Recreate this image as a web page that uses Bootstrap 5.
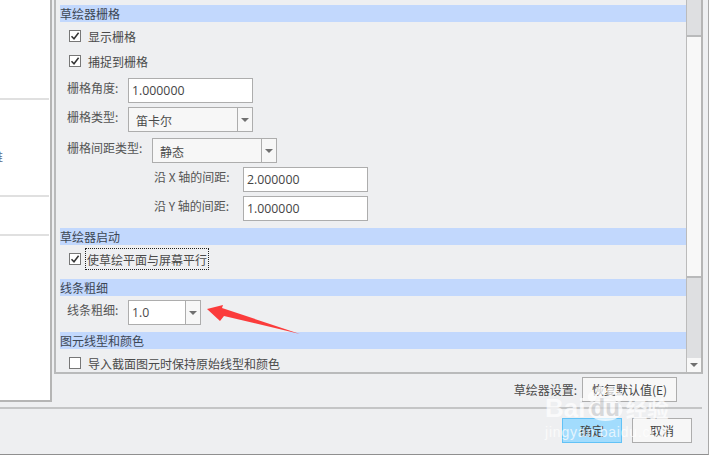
<!DOCTYPE html>
<html lang="zh"><head><meta charset="utf-8">
<link href="https://cdn.jsdelivr.net/npm/bootstrap@5.3.0/dist/css/bootstrap.min.css" rel="stylesheet">
<style>
html,body{margin:0;height:455px;overflow:hidden}
body{background:#eeeff1;font:12px/17px "Noto Sans CJK SC","Liberation Sans",sans-serif;color:#4a4a4a;}
.dlg{width:709px;height:455px;border-right:1px solid #a9a9a9;border-bottom:1px solid #8f8f8f;position:relative;overflow:hidden}
.upper{height:407px}
.nav-pane{width:52px;height:402px;background:#fff;border-right:2px solid #b5b5b5;border-bottom:2px solid #b5b5b5;flex:none;overflow:hidden}
.nav-sep{height:2px;width:49px;background:#e0e0e0}
.nav-a{height:98px}.nav-b{height:95px;padding-top:48px}.nav-c{height:37px}
.nav-cut{display:block;color:#5a6a88;margin-left:-9px;line-height:17px;height:17px}
.set-pane{margin-left:2px;width:632px;height:374px;border-left:2px solid #b9babb;border-bottom:2px solid #b9babb;padding:5px 0 0 4px;overflow:hidden;flex:none}
.scroll-bar{width:17px;height:374px;border-bottom:2px solid #b9babb;border-left:1px solid #bbb;border-right:2px solid #b5b5b5;flex:none}
.sb-top{height:37px;background:#dedfe1;border-bottom:2px solid #b9babb}
.sb-thumb{height:241px;background:#f8f8f8;border-bottom:2px solid #b9babb}
.sb-low{height:80px;background:#dedfe1}
.sb-btn{height:14px;background:#f8f8f8;padding-top:5px}
.sect{height:17px;background:#c2d8fd;color:#3c4654;line-height:17px}
.sect1{margin-bottom:8px}
.chk-row{height:12px;margin-left:9px;gap:7px;line-height:12px}
.chk-txt{margin-top:2px}
.tick{width:12px;height:12px;border:1px solid #777;background:#fff;flex:none}
.tick svg{display:block}
.gap14{margin-top:13px}
.fld{margin-top:11px;height:25px;align-items:flex-start}
.fld-lab{line-height:17px;color:#555;white-space:nowrap;padding-top:1px}
.box{width:125px;height:25px;border:1px solid #adadad;background:#fff;padding-left:3px;line-height:24px;font-size:12.3px;font-family:"Open Sans","Liberation Sans",sans-serif;color:#444;flex:none}
.drop{width:125px;height:25px;border:1px solid #adadad;background:#f7f7f7;flex:none}
.drop-val{flex:1;padding-left:7px;padding-top:1px;line-height:24px;font-size:12px}
.drop-btn{width:15px;border-left:1px solid #adadad;background:#f7f7f7}
.tri{width:0;height:0;border-left:4px solid transparent;border-right:4px solid transparent;border-top:4px solid #707070}
.focus-lab{outline:1px dotted #222;padding:4px 1px 3px 1px;line-height:13px;margin-left:-2px;height:20px;white-space:nowrap}
.foot-row{height:44px;padding-top:9px}
.hr-foot{height:2px;background:#c4c5c6;width:702px}
.act{height:25px;border:1px solid #adadad;background:#f7f7f7;color:#444;text-align:center;line-height:22px;padding:0;font-size:12px}
.act:hover{background:#f7f7f7}
.act-reset{width:95px;margin-left:5px}
.act-ok{width:60px;background:#a2dcfd;border-color:#62c2f6;margin-right:10px}
.act-ok:hover{background:#a2dcfd;border-color:#62c2f6}
.act-cancel{width:60px;margin-right:16px}
.arrow-mark{position:absolute;left:200px;top:300px}
.wm{position:absolute;left:545px;top:393px;color:#fff;opacity:.72;white-space:nowrap;pointer-events:none;font-family:"Liberation Sans",sans-serif}
.wm-row{position:relative;z-index:1}
.wm-big{font-size:26px;font-weight:700;line-height:30px}
.wm-du{margin-left:5px;font-size:24px;color:#cfd0d2}
.wm-cn{font:700 21.5px/30px "Noto Sans CJK SC",sans-serif;margin-left:6px}
.wm-small{font-size:14px;line-height:16px;letter-spacing:.8px;margin-top:1px}
.wm-paw{position:absolute;left:40px;top:-9px}
.lab-a{margin-left:7px;width:61px}
.lab-b{margin-left:7px;width:85px}
.lab-c{margin-left:94px;width:89px}
.fld-t{margin-top:4px}
.fld-s{margin-top:6px}
.fld-x,.fld-y{margin-top:4px}
.sect-b{margin-top:7px}
.chk-p{margin-top:8px;margin-bottom:14px}
.sect-c{margin-top:0}
.fld-w{margin-top:4px}
.drop-w{width:73px;background:#fff}
.val-w{padding:0 0 0 3px;font:12.3px/24px "Open Sans","Liberation Sans",sans-serif}
.sect-d{margin-top:7px}
.chk-q{margin-top:8px}
.reset-line{position:absolute;right:31px;top:377px;height:25px}
</style></head><body>
<div class="dlg">
 <div class="upper d-flex">
  <div class="nav-pane">
   <div class="nav-a"></div><div class="nav-sep"></div>
   <div class="nav-b"><span class="nav-cut">维</span></div><div class="nav-sep"></div>
   <div class="nav-c"></div><div class="nav-sep"></div>
  </div>
  <div class="set-pane">
   <div class="sect sect1">草绘器栅格</div>
   <div class="d-flex align-items-center chk-row"><span class="tick"><svg width="10" height="10" viewBox="0 0 10 10"><path d="M1.500 5.200 4 7.800 8.600 1.800" fill="none" stroke="#333" stroke-width="1.500"/></svg></span><span class="chk-txt">显示栅格</span></div>
   <div class="d-flex align-items-center chk-row gap14"><span class="tick"><svg width="10" height="10" viewBox="0 0 10 10"><path d="M1.500 5.200 4 7.800 8.600 1.800" fill="none" stroke="#333" stroke-width="1.500"/></svg></span><span class="chk-txt">捕捉到栅格</span></div>
   <div class="d-flex fld"><span class="fld-lab lab-a">栅格角度:</span><div class="box">1.000000</div></div>
   <div class="d-flex fld fld-t"><span class="fld-lab lab-a">栅格类型:</span><div class="drop d-flex"><span class="drop-val">笛卡尔</span><span class="drop-btn d-flex align-items-center justify-content-center"><i class="tri"></i></span></div></div>
   <div class="d-flex fld fld-s"><span class="fld-lab lab-b">栅格间距类型:</span><div class="drop d-flex"><span class="drop-val">静态</span><span class="drop-btn d-flex align-items-center justify-content-center"><i class="tri"></i></span></div></div>
   <div class="d-flex fld fld-x"><span class="fld-lab lab-c">沿 X 轴的间距:</span><div class="box">2.000000</div></div>
   <div class="d-flex fld fld-y"><span class="fld-lab lab-c">沿 Y 轴的间距:</span><div class="box">1.000000</div></div>
   <div class="sect sect-b">草绘器启动</div>
   <div class="d-flex align-items-center chk-row chk-p"><span class="tick"><svg width="10" height="10" viewBox="0 0 10 10"><path d="M1.500 5.200 4 7.800 8.600 1.800" fill="none" stroke="#333" stroke-width="1.500"/></svg></span><span class="focus-lab">使草绘平面与屏幕平行</span></div>
   <div class="sect sect-c">线条粗细</div>
   <div class="d-flex fld fld-w"><span class="fld-lab lab-a">线条粗细:</span><div class="drop drop-w d-flex"><span class="drop-val val-w">1.0</span><span class="drop-btn d-flex align-items-center justify-content-center"><i class="tri"></i></span></div></div>
   <div class="sect sect-d">图元线型和颜色</div>
   <div class="d-flex align-items-center chk-row chk-q"><span class="tick"></span><span class="chk-txt">导入截面图元时保持原始线型和颜色</span></div>
  </div>
  <div class="scroll-bar">
   <div class="sb-top"></div><div class="sb-thumb"></div><div class="sb-low"></div>
   <div class="sb-btn d-flex justify-content-center"><i class="tri"></i></div>
  </div>
 </div>
 <div class="hr-foot"></div>
 <div class="foot-row d-flex justify-content-end align-items-start">
  <button class="btn act act-ok rounded-0" type="button">确定</button>
  <button class="btn act act-cancel rounded-0" type="button">取消</button>
 </div>
 <div class="reset-line d-flex align-items-center">
  <span>草绘器设置:</span><button class="btn act act-reset rounded-0" type="button">恢复默认值(E)</button>
 </div>
 <svg class="arrow-mark" width="105" height="40" viewBox="0 0 105 40"><path d="M7 9 23 5 22 8 100 34 24 16 20 21Z" fill="#fb3c3c"/></svg>
 <div class="wm">
  <svg class="wm-paw" width="42" height="40" viewBox="0 0 42 40"><g fill="#fff"><ellipse cx="7" cy="13" rx="4" ry="5"/><ellipse cx="15" cy="7" rx="4" ry="5"/><ellipse cx="26" cy="7" rx="4" ry="5"/><ellipse cx="34" cy="13" rx="4" ry="5"/><ellipse cx="20.500" cy="26" rx="17" ry="11"/></g></svg>
  <div class="d-flex align-items-center wm-row"><span class="wm-big">Bai</span><span class="wm-big wm-du">du</span><span class="wm-cn">经验</span></div>
  <div class="wm-small">jingyan.baidu.com</div>
 </div>
</div>
</body></html>
